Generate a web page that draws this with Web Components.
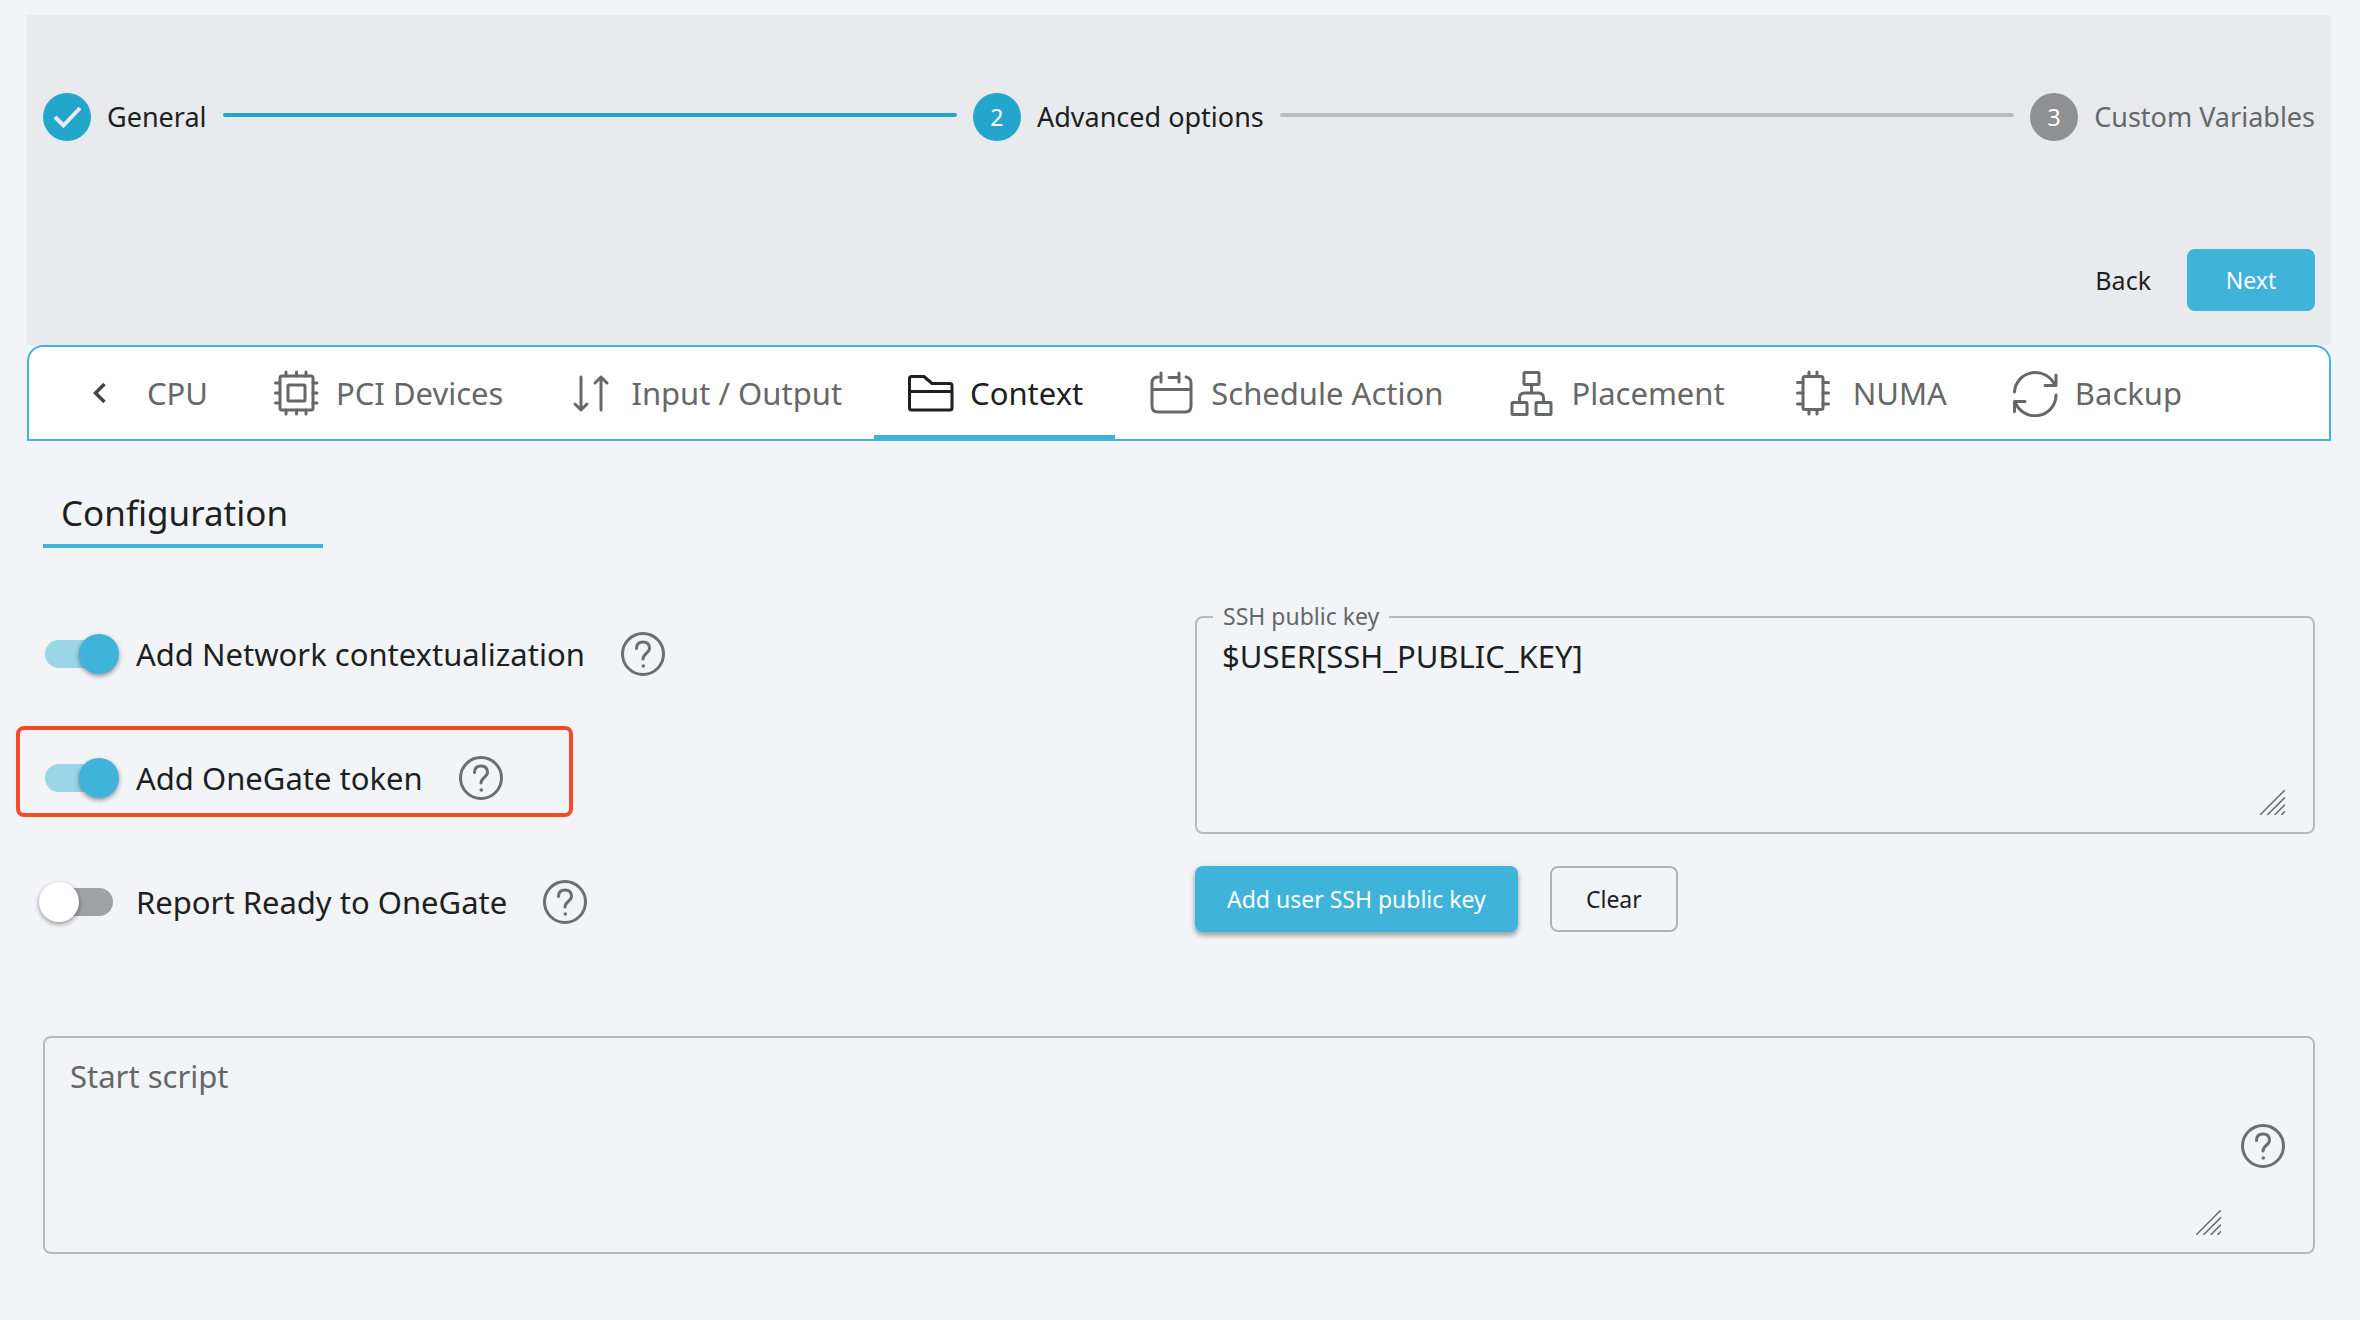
<!DOCTYPE html>
<html lang="en">
<head>
<meta charset="utf-8">
<title>VM Template - Advanced options</title>
<style>
  :root {
    --bg: #f2f4f8;
    --surface: #e8eaed;
    --primary: #40b3db;
    --primary-dark: #22a6cb;
    --text: #1d1f20;
    --muted: #666768;
    --outline: #b8babd;
    --fs-s: 23px;
    --fs-sm: 25px;
    --fs-m: 27px;
    --fs-l: 31px;
    --fs-xl: 35px;
  }
  html, body { margin: 0; height: 100%; }
  body {
    box-sizing: border-box;
    display: flex;
    flex-direction: column;
    overflow: hidden;
    padding: 15px 29px 0 27px;
    background: var(--bg);
    color: var(--text);
    font: 400 31px/40px "Noto Sans", "Open Sans", sans-serif;
  }
  body > * { flex: none; }
  header { background: var(--surface); padding: 78px 16px 34px; }
  .actions { display: flex; justify-content: flex-end; align-items: center; gap: 12px; margin-top: 108px; }
  main { padding: 0 16px; }
  .grid { display: grid; grid-template-columns: 1fr 1fr; column-gap: 32px; margin-top: 68px; }
  .toggles { display: flex; flex-direction: column; gap: 80px; padding-top: 16px; }
  .buttons { display: flex; gap: 32px; margin-top: 32px; }
  .script { margin-top: 104px; }
  footer { padding: 66px 16px 0; }
</style>
</head>
<body>
  <header>
    <one-stepper>
      <one-step state="done">General</one-step>
      <one-step state="active" number="2">Advanced options</one-step>
      <one-step state="todo" number="3">Custom Variables</one-step>
    </one-stepper>
    <div class="actions">
      <one-button kind="text">Back</one-button>
      <one-button kind="flat">Next</one-button>
    </div>
  </header>

  <one-tabs>
    <one-tab>CPU</one-tab>
    <one-tab icon="chip">PCI Devices</one-tab>
    <one-tab icon="updown">Input / Output</one-tab>
    <one-tab icon="folder" selected>Context</one-tab>
    <one-tab icon="calendar">Schedule Action</one-tab>
    <one-tab icon="network">Placement</one-tab>
    <one-tab icon="numa">NUMA</one-tab>
    <one-tab icon="refresh">Backup</one-tab>
  </one-tabs>

  <main>
    <one-heading>Configuration</one-heading>
    <div class="grid">
      <div class="toggles">
        <one-switch checked>Add Network contextualization</one-switch>
        <one-switch checked marked>Add OneGate token</one-switch>
        <one-switch>Report Ready to OneGate</one-switch>
      </div>
      <div>
        <one-field label="SSH public key" value="$USER[SSH_PUBLIC_KEY]"></one-field>
        <div class="buttons">
          <one-button kind="raised">Add user SSH public key</one-button>
          <one-button kind="outlined">Clear</one-button>
        </div>
      </div>
    </div>
    <one-field class="script" placeholder="Start script" help></one-field>
  </main>
  <footer><one-switch plain></one-switch></footer>

<script>
const svg = (body, size = 48, extra = '') =>
  `<svg viewBox="0 0 48 48" width="${size}" height="${size}" fill="none" stroke="currentColor" stroke-width="3" stroke-linecap="round" stroke-linejoin="round" aria-hidden="true" ${extra}>${body}</svg>`;

const ICONS = {
  chip: '<rect x="8" y="7" width="33" height="34" rx="2"/><rect x="16" y="16" width="17" height="16" rx="1"/><path d="M14 3v4M24.500 3v4M34 3v4M14 41v4M24.500 41v4M34 41v4M3.500 14h4M3.500 24h4M3.500 34h4M41 14h4M41 24h4M41 34h4"/>',
  updown: '<path d="M14 8v32M8 35l6 6 6-6M34 41V9M28 14l6-6 6 6"/>',
  folder: '<path d="M3.500 9.500q0-2 2-2H18l8 7h18q2 0 2 2v22.500q0 2-2 2H5.500q-2 0-2-2zM3.500 22.500h42"/>',
  calendar: '<path d="M11 8q-6 0-6 6v23q0 6 6 6h27q6 0 6-6V14q0-5-5-6M5 20.500h39M14 4v9M32 4v9M22 8.500h10"/>',
  network: '<rect x="17" y="3.500" width="15" height="12" rx="1"/><rect x="5" y="33.500" width="15" height="12" rx="1"/><rect x="29" y="33.500" width="15" height="12" rx="1"/><path d="M24.500 16v8M12.500 33v-4q0-5 5-5h14q5 0 5 5v4"/>',
  numa: '<rect x="14" y="7.500" width="20" height="33" rx="2"/><path d="M20 3v4M28 3v4M20 41v4M28 41v4M8.500 13.500H14M8.500 24H14M8.500 35H14M34 13.500h5.500M34 24h5.500M34 35h5.500"/>',
  refresh: '<path d="M3.500 23A21 20.500 0 0 1 44 16.500M45 6v10.500H34M45 26A21 20.500 0 0 1 4 32.500M3.500 42.500V32.500H14"/>',
  help: '<circle cx="24" cy="24" r="20.500"/><path d="M17.500 18.500q0-6.500 6.500-6.500t6.500 6.500c0 4-6.500 5.500-6.500 10.500"/><circle cx="24.300" cy="36" r="1.800" fill="currentColor" stroke="none"/>',
  grip: '<path stroke-width="3" stroke-linecap="butt" d="M0 48L48 0M14 48L48 14M28 48L48 28M41 48L48 41"/>',
};

const define = (name, render) => customElements.define(name, class extends HTMLElement {
  connectedCallback() {
    if (this.shadowRoot) return;
    this.attachShadow({ mode: 'open' }).innerHTML = render(this);
  }
});

define('one-stepper', () => `
  <style>
    :host { display: flex; align-items: center; gap: 16px; }
    .line { flex: 1; height: 4px; margin-bottom: 4px; border-radius: 2px; background: var(--primary-dark); }
    .line.todo { background: #bbbcbc; }
  </style>
  <slot name="s0"></slot><div class="line"></div><slot name="s1"></slot><div class="line todo"></div><slot name="s2"></slot>`);

document.querySelectorAll('one-step').forEach((step, i) => { step.slot = 's' + i; });

define('one-step', el => `
  <style>
    :host { display: flex; align-items: center; gap: 16px; font-size: var(--fs-m); white-space: nowrap; }
    :host([state="todo"]) { color: var(--muted); }
    .dot { display: grid; place-items: center; width: 48px; height: 48px; border-radius: 50%;
      background: var(--primary-dark); color: #fff; font-size: var(--fs-s); line-height: 48px; }
    :host([state="todo"]) .dot { background: #8f9092; }
    .dot svg { color: var(--surface); stroke-width: 4; stroke-linecap: butt; stroke-linejoin: miter; }
  </style>
  <span class="dot">${el.hasAttribute('number') ? el.getAttribute('number') : svg('<path d="M12 24l8.500 8.500L37 15"/>')}</span>
  <slot></slot>`);

define('one-button', () => `
  <style>
    :host { display: inline-flex; }
    button { box-sizing: border-box; font: inherit; font-size: var(--fs-s); line-height: 30px; padding: 16px 32px; min-width: 128px;
      border: 0; border-radius: 8px; background: var(--primary); color: #fff; white-space: nowrap; }
    :host([kind="text"]) button { background: none; color: inherit; min-width: 0; padding: 16px 24px; font-size: var(--fs-sm); }
    :host([kind="raised"]) button { padding: 18px 32px; box-shadow: 0 2px 6px rgba(0,0,0,.22), 0 4px 4px rgba(0,0,0,.2); }
    :host([kind="outlined"]) button { padding: 16px 32px; background: none; color: inherit; border: 2px solid #b2b3b5; }
  </style>
  <button type="button"><slot></slot></button>`);

define('one-tabs', () => `
  <style>
    :host { display: flex; align-items: stretch; box-sizing: border-box; height: 96px; padding-left: 54px;
      background: #fff; border: 2px solid var(--primary); border-radius: 16px 16px 0 0; }
    .back { border: 0; background: none; padding: 0; width: 32px; color: #444; display: grid; place-items: center; }
    nav { display: flex; }
  </style>
  <button class="back" type="button" aria-label="Scroll tabs left">${svg('<path stroke-width="7" stroke-linecap="butt" stroke-linejoin="miter" d="M35 6L17 24l18 18"/>', 24)}</button>
  <nav><slot></slot></nav>`);

define('one-tab', el => `
  <style>
    :host { display: flex; color: var(--muted); }
    :host([selected]) { color: var(--text); box-shadow: inset 0 -4px var(--primary); }
    button { display: flex; align-items: center; gap: 16px; padding: 0 32px; border: 0; background: none;
      font: inherit; font-size: var(--fs-l); color: inherit; white-space: nowrap; }
  </style>
  <button type="button">${el.hasAttribute('icon') ? svg(ICONS[el.getAttribute('icon')]) : ''}<span><slot></slot></span></button>`);

define('one-heading', () => `
  <style>
    :host { display: flex; }
    h2 { box-sizing: border-box; width: 280px; margin: 44px 0 0; padding: 6px 18px 9px; font-weight: 400;
      font-size: var(--fs-xl); line-height: 44px; border-bottom: 4px solid var(--primary); white-space: nowrap; }
  </style>
  <h2><slot></slot></h2>`);

define('one-help', () => `
  <style>
    :host { display: inline-flex; color: #6d6e70; }
    button { display: flex; padding: 0; border: 0; background: none; color: inherit; border-radius: 50%; }
  </style>
  <button type="button" aria-label="Help">${svg(ICONS.help)}</button>`);

define('one-switch', el => `
  <style>
    :host { position: relative; display: flex; align-items: center; gap: 34px; height: 44px; }
    :host([marked])::after { content: ""; position: absolute; left: -27px; top: -30px; width: 549px; height: 83px;
      border: 4px solid #f64a26; border-radius: 8px; pointer-events: none; }
    label { display: flex; align-items: center; gap: 23px; white-space: nowrap; }
    input { appearance: none; box-sizing: border-box; display: flex; align-items: center; width: 68px; height: 28px;
      margin: 0 0 0 2px; border-radius: 14px; background: #a0a1a3; }
    input::before { content: ""; flex: none; width: 40px; height: 40px; margin-left: -6px; border-radius: 50%;
      background: #fff; box-shadow: 0 2px 4px rgba(0,0,0,.3), 0 2px 6px rgba(0,0,0,.12); }
    input:checked { background: #9ad5e8; }
    input:checked::before { margin-left: 34px; background: var(--primary); }
  </style>
  <label><input type="checkbox" role="switch" ${el.hasAttribute('checked') ? 'checked' : ''} ${el.hasAttribute('plain') ? 'aria-label="Option"' : ''}><span><slot></slot></span></label>
  ${el.hasAttribute('plain') ? '' : '<one-help></one-help>'}`);

define('one-field', el => {
  const label = el.getAttribute('label');
  const hint = el.getAttribute('placeholder') || '';
  const help = el.hasAttribute('help');
  return `
  <style>
    :host { position: relative; display: flex; align-items: center; box-sizing: border-box; height: 218px;
      padding: 18px 28px 17px 25px; border: 2px solid var(--outline); border-radius: 8px; }
    label { position: absolute; left: 16px; top: -18px; padding: 0 10px; background: var(--bg);
      color: var(--muted); font-size: var(--fs-s); line-height: 32px; }
    .area { position: relative; flex: 1; align-self: stretch; display: flex; }
    textarea { flex: 1; min-width: 0; padding: 0; border: 0; outline: 0; resize: none; background: none;
      font: inherit; line-height: 40px; color: inherit; overflow: hidden; }
    textarea::placeholder { color: var(--muted); opacity: 1; }
    .grip { position: absolute; right: 0; bottom: 0; color: #6d6e70; }
    one-help { margin: 0 -2px 0 18px; }
  </style>
  ${label ? `<label for="t">${label}</label>` : ''}
  <div class="area"><textarea id="t" placeholder="${hint}" ${label ? '' : `aria-label="${hint}"`}>${el.getAttribute('value') || ''}</textarea>${svg(ICONS.grip, 25, 'class="grip"')}</div>
  ${help ? '<one-help></one-help>' : ''}`;
});
</script>
</body>
</html>
